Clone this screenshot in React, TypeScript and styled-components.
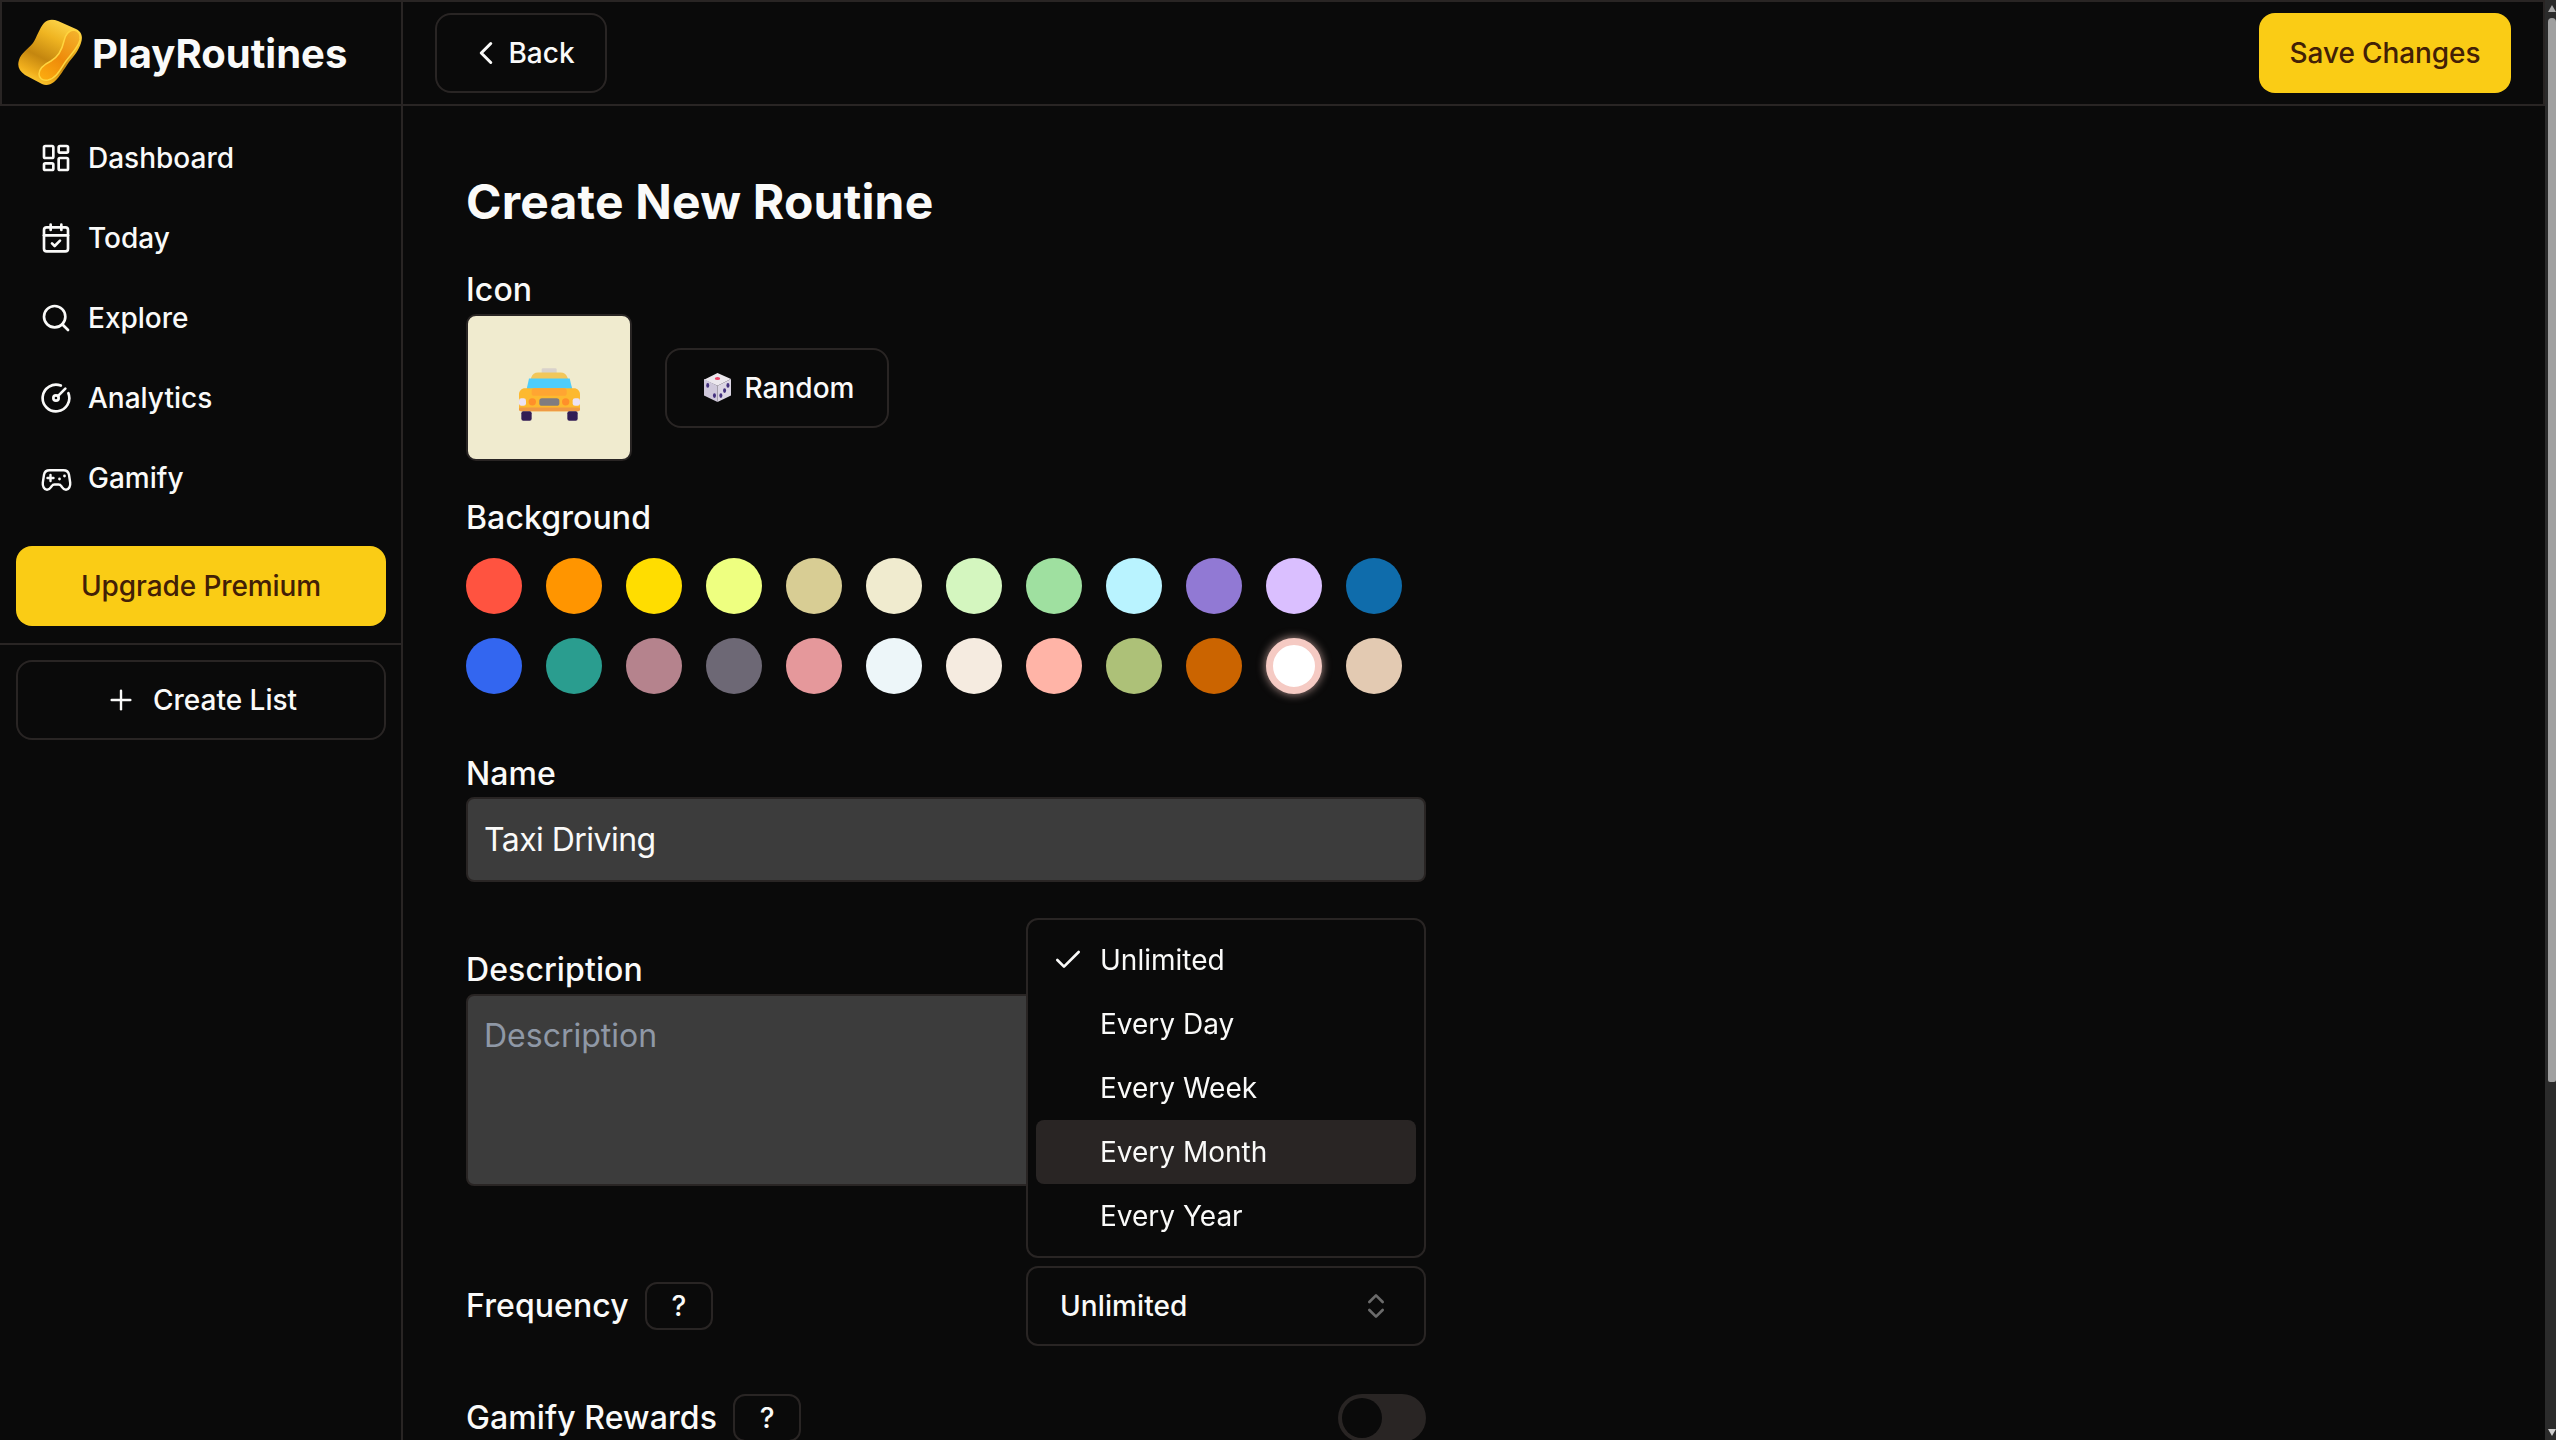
import styled, { createGlobalStyle } from 'styled-components';
import {
  CalendarCheck,
  Check,
  ChevronLeft,
  ChevronsUpDown,
  CircleGauge,
  LayoutDashboard,
  Plus,
  Search,
} from 'lucide-react';

const line = '#292524';
const page = '#0a0a0a';
const ink = '#fafaf9';
const yellow = '#facc15';

const GlobalStyle = createGlobalStyle`
  html, body {
    margin: 0;
    height: 100%;
    background: ${page};
    overflow: hidden;
  }
  * { box-sizing: border-box; }
  body {
    font-family: Inter, "Liberation Sans", sans-serif;
    color: ${ink};
  }
`;

const Shell = styled.div`
  display: flex;
  width: 2556px;
  height: 1440px;
  overflow: hidden;
  background: ${page};
`;

const Column = styled.div`
  display: flex;
  flex-direction: column;
  width: 2545px;
  height: 100%;
`;

const TopBar = styled.header`
  display: flex;
  align-items: center;
  height: 106px;
  flex-shrink: 0;
  border: 2px solid ${line};
`;

const LogoCell = styled.div`
  display: flex;
  align-items: center;
  gap: 8px;
  width: 401px;
  height: 100%;
  padding-left: 16px;
  border-right: 2px solid ${line};
`;

const LogoText = styled.span`
  font-size: 40px;
  font-weight: 700;
  letter-spacing: 0;
`;

const BarActions = styled.div`
  flex: 1;
  display: flex;
  align-items: center;
  justify-content: space-between;
  padding: 0 32px 0 32px;
`;

const OutlineButton = styled.button<{ $width: number; $gap: number }>`
  display: inline-flex;
  align-items: center;
  justify-content: center;
  gap: ${(p) => p.$gap}px;
  width: ${(p) => p.$width}px;
  height: 80px;
  padding: 0;
  border: 2px solid ${line};
  border-radius: 16px;
  background: transparent;
  color: ${ink};
  font: 500 28px Inter, sans-serif;
`;

const RandomButton = styled(OutlineButton)`
  padding-left: 4px;
`;

const YellowButton = styled.button<{ $width: number }>`
  width: ${(p) => p.$width}px;
  height: 80px;
  padding: 0;
  border: 0;
  border-radius: 16px;
  background: ${yellow};
  color: #422006;
  font: 500 28px Inter, sans-serif;
  letter-spacing: -0.1px;
`;

const Body = styled.div`
  flex: 1;
  display: flex;
  min-height: 0;
`;

const Sidebar = styled.aside`
  width: 403px;
  flex-shrink: 0;
  border-right: 2px solid ${line};
`;

const Nav = styled.nav`
  display: flex;
  flex-direction: column;
  gap: 16px;
  padding: 20px 16px 36px;
`;

const NavItem = styled.a`
  display: flex;
  align-items: center;
  gap: 16px;
  height: 64px;
  padding-left: 24px;
  font-size: 28px;
  font-weight: 500;
`;

const SidebarBlock = styled.div`
  padding: 0 15px 0 16px;
`;

const Divider = styled.div`
  height: 2px;
  margin: 17px 0 15px;
  background: ${line};
`;

const Main = styled.main`
  flex: 1;
  padding: 66px 0 0 63px;
  min-width: 0;
  overflow: hidden;
`;

const Title = styled.h1`
  margin: 0 0 37px;
  font-size: 48px;
  line-height: 60px;
  font-weight: 700;
  letter-spacing: 0.2px;
`;

const Form = styled.div`
  display: flex;
  flex-direction: column;
  width: 960px;
`;

const Label = styled.label<{ $gap: number }>`
  display: block;
  padding-top: 1px;
  font-size: 32px;
  line-height: 40px;
  font-weight: 500;
  letter-spacing: 0.1px;
  margin-bottom: ${(p) => p.$gap}px;
`;

const IconRow = styled.div`
  display: flex;
  align-items: center;
  gap: 33px;
  margin-bottom: 36px;
`;

const IconTile = styled.div`
  display: flex;
  align-items: center;
  justify-content: center;
  width: 166px;
  height: 147px;
  padding-top: 13px;
  border: 2px solid ${line};
  border-radius: 10px;
  background: #f0ebcf;
`;

const Swatches = styled.div`
  display: grid;
  grid-template-columns: repeat(12, 56px);
  gap: 24px;
  margin-bottom: 59px;
`;

const Swatch = styled.span<{ $color: string; $selected?: boolean }>`
  width: 56px;
  height: 56px;
  border-radius: 50%;
  background: ${(p) => p.$color};
  ${(p) =>
    p.$selected &&
    `border: 7px solid #f5cac3; box-shadow: 0 0 8px 1px rgba(245, 202, 195, 0.6);`}
`;

const TextField = styled.div<{ $height: number; $muted?: boolean }>`
  height: ${(p) => p.$height}px;
  padding: 0 16px;
  border: 2px solid ${line};
  border-radius: 8px;
  background: #3c3c3c;
  color: ${(p) => (p.$muted ? '#8f98a6' : ink)};
  font-size: 32px;
`;

const NameField = styled(TextField)`
  display: flex;
  align-items: center;
  margin-bottom: 67px;
  letter-spacing: -0.55px;
`;

const DescriptionField = styled(TextField)`
  padding-top: 18px;
  line-height: 44px;
  margin-bottom: 80px;
`;

const FieldRow = styled.div<{ $height: number; $gap: number }>`
  display: flex;
  align-items: center;
  justify-content: space-between;
  height: ${(p) => p.$height}px;
  margin-bottom: ${(p) => p.$gap}px;
`;

const LabelGroup = styled.div`
  display: flex;
  align-items: center;
  gap: 16px;
`;

const InlineLabel = styled(Label)`
  padding-top: 0;
`;

const HelpButton = styled.button`
  width: 68px;
  height: 48px;
  padding: 0;
  border: 2px solid ${line};
  border-radius: 12px;
  background: transparent;
  color: ${ink};
  font: 500 28px Inter, sans-serif;
`;

const SelectWrap = styled.div`
  position: relative;
  width: 400px;
`;

const SelectTrigger = styled.button`
  display: flex;
  align-items: center;
  justify-content: space-between;
  width: 100%;
  height: 80px;
  padding: 0 32px 0 32px;
  border: 2px solid ${line};
  border-radius: 12px;
  background: transparent;
  color: ${ink};
  font: 500 28px Inter, sans-serif;
  letter-spacing: 0.1px;
`;

const Dropdown = styled.ul`
  position: absolute;
  left: 0;
  right: 0;
  bottom: calc(100% + 8px);
  margin: 0;
  padding: 8px;
  list-style: none;
  border: 2px solid ${line};
  border-radius: 12px;
  background: ${page};
  will-change: transform;
`;

const Option = styled.li<{ $active?: boolean }>`
  position: relative;
  display: flex;
  align-items: center;
  height: 64px;
  padding-left: 64px;
  border-radius: 8px;
  background: ${(p) => (p.$active ? line : 'transparent')};
  font-size: 28px;
  font-weight: 400;
`;

const OptionCheck = styled.span`
  position: absolute;
  left: 16px;
  display: flex;
`;

const Toggle = styled.span`
  display: flex;
  align-items: center;
  width: 88px;
  height: 48px;
  padding: 4px;
  border-radius: 24px;
  background: ${line};
`;

const ToggleKnob = styled.span`
  width: 40px;
  height: 40px;
  border-radius: 50%;
  background: ${page};
`;

const ScrollTrack = styled.div`
  position: relative;
  width: 11px;
  height: 100%;
  padding-left: 3px;
  background: #2b2b2b;
`;

const ScrollThumb = styled.div`
  width: 100%;
  height: 1064px;
  margin-top: 18px;
  border-radius: 4px 4px 2px 2px;
  background: #a0a0a0;
`;

const ScrollArrow = styled.span<{ $down?: boolean }>`
  position: absolute;
  left: 3px;
  ${(p) => (p.$down ? 'bottom: 4px;' : 'top: 5px;')}
  border-left: 4px solid transparent;
  border-right: 4px solid transparent;
  ${(p) => (p.$down ? 'border-top: 7px solid #cfcfcf;' : 'border-bottom: 7px solid #a8a8a8;')}
`;

const LogoMark = () => (
  <svg width="66" height="68" viewBox="18 20 66 68">
    <defs>
      <linearGradient id="logoOuter" x1="0.75" y1="0" x2="0.25" y2="1">
        <stop offset="0" stopColor="#ffd94f" />
        <stop offset="0.3" stopColor="#efb421" />
        <stop offset="0.62" stopColor="#c4860f" />
        <stop offset="0.85" stopColor="#f0ae1c" />
        <stop offset="1" stopColor="#ffd23a" />
      </linearGradient>
      <linearGradient id="logoInner" x1="0.8" y1="0" x2="0.2" y2="1">
        <stop offset="0" stopColor="#f3b02a" />
        <stop offset="0.55" stopColor="#ee8a0a" />
        <stop offset="1" stopColor="#fba90f" />
      </linearGradient>
    </defs>
    <path
      d="M44 24c4-4 9-4 14-2l18 8c6 3 7 8 5 14-2 7-7 13-12 19-5 7-9 15-15 20-4 3-8 4-12 2l-17-9c-6-4-8-9-6-15 2-7 9-11 14-17 4-6 6-14 11-20z"
      fill="url(#logoOuter)"
    />
    <path
      d="M64 42c1-6 5-11 10-11 5 1 7 5 6 10-2 8-9 14-14 21-5 7-9 17-18 19-6 1-9-2-9-6 0-6 6-10 12-13 7-4 11-11 13-20z"
      fill="url(#logoInner)"
      stroke="#ffd53f"
      strokeWidth="1.5"
    />
  </svg>
);

const GamepadIcon = () => (
  <svg
    width="32"
    height="32"
    viewBox="-0.5 0 32 32"
    fill="none"
    stroke="currentColor"
    strokeWidth="2.4"
    strokeLinecap="round"
    strokeLinejoin="round"
  >
    <path d="M9 8.2h14c3 0 5 1.8 5.5 4.5l1.2 8c.4 3-1.2 7.1-4.2 7.1-2 0-3-1-4-2.6l-.8-1.2c-.6-1-1.4-1.5-2.6-1.5h-4.2c-1.2 0-2 .5-2.6 1.5l-.8 1.2c-1 1.6-2 2.6-4 2.6-3 0-4.6-4.1-4.2-7.1l1.2-8c.5-2.7 2.5-4.5 5.5-4.5z" />
    <path d="M7 16h6M10 13v6" />
    <path d="M19 17h.01M24 14h.01" strokeWidth="2.8" />
  </svg>
);

const TaxiEmoji = () => (
  <svg width="61" height="53" viewBox="117 87 183 158">
    <rect x="185" y="87" width="45" height="20" rx="4" fill="#d9d2cc" />
    <path d="M140 150l14-36c3-9 10-14 20-14h68c10 0 17 5 20 14l15 36z" fill="#f2c75a" />
    <path d="M147 118h122l8 32H140z" fill="#4fcdfb" />
    <path d="M117 165c0-10 8-18 18-18h147c10 0 18 8 18 18v42c0 5-4 9-9 9H126c-5 0-9-4-9-9z" fill="#fdb92f" />
    <rect x="155" y="147" width="105" height="23" rx="8" fill="#ffa532" />
    <rect x="117" y="205" width="183" height="11" rx="5" fill="#ef9a45" />
    <rect x="117" y="177" width="21" height="23" rx="7" fill="#ece3f5" />
    <rect x="278" y="177" width="22" height="23" rx="7" fill="#ece3f5" />
    <circle cx="157" cy="188" r="11" fill="#ff8f2a" />
    <circle cx="257" cy="188" r="11" fill="#ff8f2a" />
    <rect x="178" y="177" width="60" height="23" rx="8" fill="#807c80" />
    <rect x="124" y="216" width="31" height="29" rx="6" fill="#321c55" />
    <rect x="262" y="216" width="31" height="29" rx="6" fill="#321c55" />
  </svg>
);

const DiceEmoji = () => (
  <svg width="27" height="29" viewBox="672 98 80 86">
    <path d="M712 98l40 18-40 20-40-18z" fill="#ece8ee" />
    <path d="M672 116l40 20v48l-40-19z" fill="#cfc8db" />
    <path d="M752 116l-40 20v48l40-19z" fill="#dcd6e4" />
    <ellipse cx="712" cy="114" rx="8" ry="4.5" fill="#f0456a" />
    <ellipse cx="683" cy="135" rx="4.5" ry="7" fill="#43307e" />
    <ellipse cx="703" cy="165" rx="4.5" ry="7" fill="#43307e" />
    <ellipse cx="743" cy="135" rx="4.5" ry="7" fill="#43307e" />
    <ellipse cx="733" cy="150" rx="4.5" ry="7" fill="#43307e" />
    <ellipse cx="722" cy="165" rx="4.5" ry="7" fill="#43307e" />
  </svg>
);

const navItems = [
  { label: 'Dashboard', icon: <LayoutDashboard size={32} /> },
  { label: 'Today', icon: <CalendarCheck size={32} /> },
  { label: 'Explore', icon: <Search size={32} /> },
  { label: 'Analytics', icon: <CircleGauge size={32} /> },
  { label: 'Gamify', icon: <GamepadIcon /> },
];

const swatchColors = [
  '#ff5340', '#ff9500', '#ffdd00', '#eeff80', '#d8cd94', '#f0ebcf',
  '#d4f6bf', '#9fe0a0', '#b9f3ff', '#9179d4', '#dabfff', '#0f6cab',
  '#3366f0', '#2a9d8f', '#b5838d', '#6d6875', '#e5989b', '#edf6f9',
  '#f5ebe0', '#ffb4a7', '#adc178', '#cb6400', '#ffffff', '#e3cab2',
];

const frequencies = ['Unlimited', 'Every Day', 'Every Week', 'Every Month', 'Every Year'];

export default function App() {
  return (
    <>
      <GlobalStyle />
      <Shell>
        <Column>
          <TopBar>
            <LogoCell>
              <LogoMark />
              <LogoText>PlayRoutines</LogoText>
            </LogoCell>
            <BarActions>
              <OutlineButton $width={172} $gap={3}>
                <ChevronLeft size={38} strokeWidth={1.9} />
                Back
              </OutlineButton>
              <YellowButton $width={252}>Save Changes</YellowButton>
            </BarActions>
          </TopBar>
          <Body>
            <Sidebar>
              <Nav>
                {navItems.map((item) => (
                  <NavItem key={item.label}>
                    {item.icon}
                    {item.label}
                  </NavItem>
                ))}
              </Nav>
              <SidebarBlock>
                <YellowButton $width={370}>Upgrade Premium</YellowButton>
              </SidebarBlock>
              <Divider />
              <SidebarBlock>
                <OutlineButton $width={370} $gap={16}>
                  <Plus size={32} strokeWidth={1.8} />
                  Create List
                </OutlineButton>
              </SidebarBlock>
            </Sidebar>
            <Main>
              <Title>Create New Routine</Title>
              <Form>
                <Label $gap={4}>Icon</Label>
                <IconRow>
                  <IconTile>
                    <TaxiEmoji />
                  </IconTile>
                  <RandomButton $width={224} $gap={14}>
                    <DiceEmoji />
                    Random
                  </RandomButton>
                </IconRow>
                <Label $gap={20}>Background</Label>
                <Swatches>
                  {swatchColors.map((color, i) => (
                    <Swatch key={i} $color={color} $selected={i === 22} />
                  ))}
                </Swatches>
                <Label $gap={3}>Name</Label>
                <NameField $height={85}>Taxi Driving</NameField>
                <Label $gap={4}>Description</Label>
                <DescriptionField $height={192} $muted>
                  Description
                </DescriptionField>
                <FieldRow $height={80} $gap={48}>
                  <LabelGroup>
                    <InlineLabel $gap={0}>Frequency</InlineLabel>
                    <HelpButton>?</HelpButton>
                  </LabelGroup>
                  <SelectWrap>
                    <Dropdown>
                      {frequencies.map((f, i) => (
                        <Option key={f} $active={f === 'Every Month'}>
                          {i === 0 && (
                            <OptionCheck>
                              <Check size={32} strokeWidth={2} />
                            </OptionCheck>
                          )}
                          {f}
                        </Option>
                      ))}
                    </Dropdown>
                    <SelectTrigger>
                      Unlimited
                      <ChevronsUpDown size={32} color="#6b6b6b" strokeWidth={2} />
                    </SelectTrigger>
                  </SelectWrap>
                </FieldRow>
                <FieldRow $height={48} $gap={0}>
                  <LabelGroup>
                    <InlineLabel $gap={0}>Gamify Rewards</InlineLabel>
                    <HelpButton>?</HelpButton>
                  </LabelGroup>
                  <Toggle>
                    <ToggleKnob />
                  </Toggle>
                </FieldRow>
              </Form>
            </Main>
          </Body>
        </Column>
        <ScrollTrack>
          <ScrollArrow />
          <ScrollThumb />
          <ScrollArrow $down />
        </ScrollTrack>
      </Shell>
    </>
  );
}
